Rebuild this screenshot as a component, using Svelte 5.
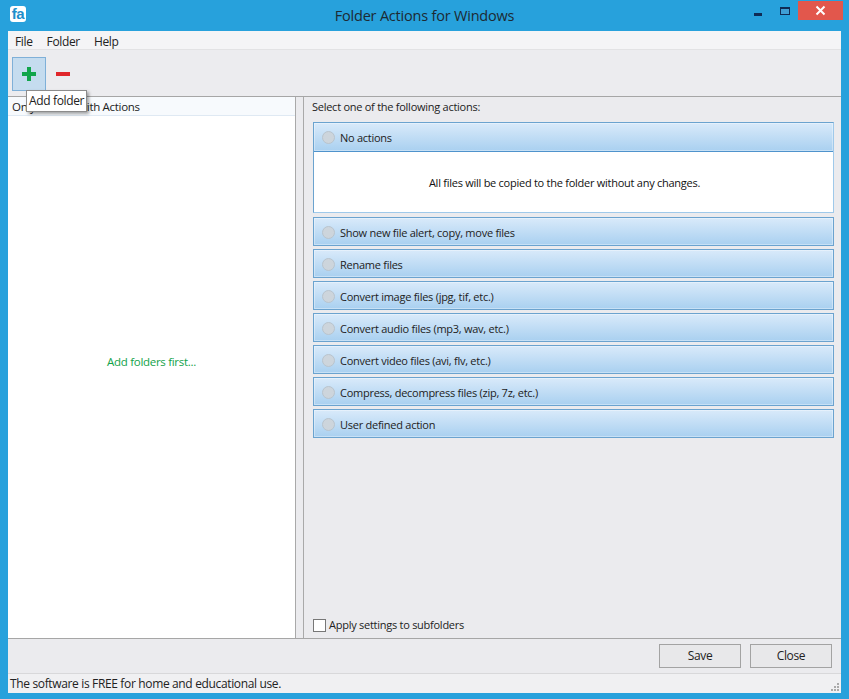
<script>
  const panels = [
    'Show new file alert, copy, move files',
    'Rename files',
    'Convert image files (jpg, tif, etc.)',
    'Convert audio files (mp3, wav, etc.)',
    'Convert video files (avi, flv, etc.)',
    'Compress, decompress files (zip, 7z, etc.)',
    'User defined action'
  ];
</script>

<div class="window">
  <header class="titlebar">
    <div class="appicon">fa</div>
    <div class="title">Folder Actions for Windows</div>
    <div class="controls">
      <span class="min"></span>
      <span class="max"></span>
      <span class="close">
        <svg width="11" height="11" viewBox="0 0 11 11"><path d="M1.5 1.5l8 8M9.5 1.5l-8 8" stroke="#fff" stroke-width="2" fill="none"/></svg>
      </span>
    </div>
  </header>

  <div class="client">
    <nav class="menu">
      <span>File</span><span>Folder</span><span>Help</span>
    </nav>

    <div class="toolbar">
      <button class="tool active" aria-label="Add folder">
        <svg width="14" height="14" viewBox="0 0 14 14"><path d="M5 0h4v5h5v4H9v5H5V9H0V5h5z" fill="#11a54b"/></svg>
      </button>
      <button class="tool" aria-label="Remove folder">
        <svg width="14" height="14" viewBox="0 0 14 14"><path d="M0 5h14v4H0z" fill="#e0262b"/></svg>
      </button>
    </div>

    <main class="body">
      <section class="left">
        <div class="colhead">
          <span>Only Folders with Actions</span>
          <div class="tooltip">Add folder</div>
        </div>
        <div class="empty">Add folders first...</div>
      </section>
      <div class="splitter"></div>
      <section class="right">
        <div class="prompt">Select one of the following actions:</div>
        <div class="panels">
          <div class="panel open">
            <div class="phead"><span class="radio"></span>No actions</div>
            <div class="pbody">All files will be copied to the folder without any changes.</div>
          </div>
          {#each panels as p}
            <div class="panel">
              <div class="phead"><span class="radio"></span>{p}</div>
            </div>
          {/each}
        </div>
        <label class="check"><span class="box"></span>Apply settings to subfolders</label>
      </section>
    </main>

    <footer class="footer">
      <button class="btn">Save</button>
      <button class="btn">Close</button>
    </footer>

    <div class="status">
      <span>The software is FREE for home and educational use.</span>
      <svg class="grip" width="10" height="10" viewBox="0 0 10 10" fill="#a9a9a9"><path d="M7 1h2v2H7zM4 4h2v2H4zM7 4h2v2H7zM1 7h2v2H1zM4 7h2v2H4zM7 7h2v2H7z"/></svg>
    </div>
  </div>
</div>

<style>
  :global(body) { margin: 0; background: #27a1dc; }
  .window {
    width: 849px; height: 699px; box-sizing: border-box;
    background: #27a1dc; padding: 0 8px 6px;
    display: flex; flex-direction: column; overflow: hidden;
    font: 12px/16px "Open Sans", "Liberation Sans", sans-serif;
    letter-spacing: -0.35px; color: #222;
  }
  .titlebar { height: 31px; flex: none; display: flex; align-items: center; position: relative; }
  .appicon {
    width: 16px; height: 16px; margin-left: 2px; margin-top: -3px; background: #fff; border-radius: 3px;
    color: #1f8fcb; font: bold 15px/15px "Liberation Sans", sans-serif; letter-spacing: -0.5px; text-align: center;
  }
  .title { flex: 1; text-align: center; font-size: 14.5px; letter-spacing: -0.2px; color: #1d2a33; margin-right: 18px; }
  .controls { position: absolute; right: -2px; top: 1px; display: flex; align-items: flex-start; }
  .min { width: 8px; height: 3px; background: #0f2b55; margin: 12px 18px 0 0; }
  .max { width: 10px; height: 8px; box-sizing: border-box; border: 1px solid #0f2b55; border-top-width: 2px; background: #3f9fd6; margin: 6px 8px 0 0; }
  .close { width: 45px; height: 19px; background: #e2574c; display: flex; align-items: center; justify-content: center; }

  .client { flex: 1; min-height: 0; display: flex; flex-direction: column; background: #ebebee; }
  .menu { height: 19px; flex: none; display: flex; gap: 14px; padding: 2px 0 0 7px; background: #f4f4f6; box-sizing: border-box; border-bottom: 1px solid #e2e2e4; }
  .menu span { line-height: 18px; }
  .toolbar { height: 47px; flex: none; display: flex; padding: 7px 0 0 4px; box-sizing: border-box; background: #ececef; border-bottom: 1px solid #a6a6a6; }
  .tool { width: 34px; height: 34px; padding: 0; border: 1px solid transparent; background: transparent; display: flex; align-items: center; justify-content: center; }
  .tool.active { background: #c5dcef; border-color: #7fb0d8; }
  .tooltip {
    position: absolute; left: 18px; top: -7px; height: 22px; padding: 0 2px; box-sizing: border-box; line-height: 19px; white-space: nowrap; z-index: 2;
    font-size: 12px; letter-spacing: -0.35px;
    background: #fff; border: 1px solid #8c8c8c; box-shadow: 2px 2px 3px rgba(0,0,0,.35);
  }

  .body { flex: 1; min-height: 0; display: flex; border-bottom: 1px solid #a6a6a6; font-size: 11px; letter-spacing: -0.26px; }
  .left { width: 287px; flex: none; background: #fff; display: flex; flex-direction: column; }
  .colhead { height: 19px; flex: none; padding-left: 4px; line-height: 19px; box-sizing: border-box; background: #f7fafd; border-bottom: 1px solid #dfe9f3; white-space: nowrap; position: relative; font-size: 11.5px; letter-spacing: -0.3px; }
  .empty { flex: 1; display: flex; align-items: center; justify-content: center; color: #12a24a; padding-bottom: 31px; font-size: 11.5px; letter-spacing: -0.3px; }
  .splitter { width: 9px; flex: none; border-left: 1px solid #a9a9a9; border-right: 1px solid #a9a9a9; box-sizing: border-box; background: #ebebee; }
  .right { flex: 1; min-width: 0; padding: 1px 0 0 8px; display: flex; flex-direction: column; }
  .prompt { height: 18px; line-height: 18px; }
  .panels { margin: 6px 0 0 1px; width: 521px; display: flex; flex-direction: column; gap: 3px; }
  .panels .open { margin-bottom: 1px; }
  .panel { border: 1px solid #6ba3cf; box-sizing: border-box; background: #fff; }
  .phead {
    height: 27px; display: flex; align-items: center; padding: 2px 0 0 8px; box-sizing: border-box;
    background: linear-gradient(#d9eafa, #a9d0f0);
    box-shadow: inset 0 0 0 1px rgba(255,255,255,.35);
  }
  .open { border-color: #6ba3cf #9fc9ea #9fc9ea #6ba3cf; }
  .open .phead { height: 29px; padding-top: 1px; border-bottom: 1px solid #4f93cc; }
  .pbody { height: 60px; display: flex; align-items: center; justify-content: center; color: #111; padding: 2px 18px 0 0; box-sizing: border-box; }
  .radio { width: 11px; height: 11px; border-radius: 50%; background: #cdd5dc; border: 1px solid #b9c4cd; margin-right: 5px; flex: none; }
  .check { margin-top: auto; margin-bottom: 4px; display: flex; align-items: center; height: 18px; margin-left: 1px; }
  .box { width: 11px; height: 11px; border: 1px solid #777; background: #fff; margin-right: 3px; }

  .footer { height: 35px; flex: none; display: flex; justify-content: flex-end; gap: 9px; padding: 5px 9px 0 0; box-sizing: border-box; border-bottom: 1px solid #d8d8da; }
  .btn { width: 82px; height: 24px; padding: 0; border: 1px solid #a3a3a3; background: #e8e8ea; font: inherit; letter-spacing: inherit; color: #222; }
  .status { height: 19px; flex: none; padding-left: 2px; line-height: 19px; position: relative; background: #f0f0f2; }
  .grip { position: absolute; right: 1px; bottom: 1px; }
</style>
